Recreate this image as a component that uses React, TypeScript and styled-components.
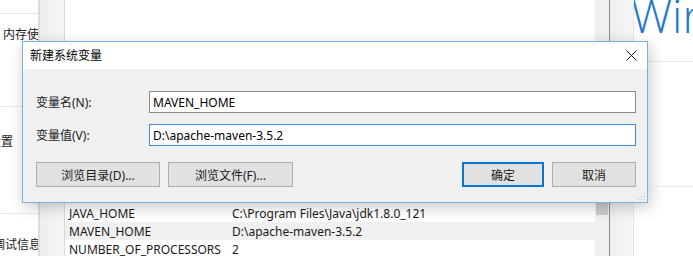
import React, { FC } from 'react';
import styled, { createGlobalStyle } from 'styled-components';

const GlobalStyle = createGlobalStyle`
    html, body {
        margin: 0;
        padding: 0;
        background: #ffffff;
    }
    body {
        font-family: "Noto Sans", "Noto Sans CJK SC", sans-serif;
        font-size: 12px;
        color: #000000;
    }
`;

const StyledDesktop = styled.div`
    position: relative;
    width: 693px;
    height: 256px;
    overflow: hidden;
    display: flex;
    background: #ffffff;
`;

/* left settings pane, clipped */
const StyledLeftPane = styled.div`
    width: 38px;
    flex: none;
    display: flex;
    flex-direction: column;
    overflow: hidden;
    background: #ffffff;
`;
const StyledLeftSection = styled.div<{ $h: number; $pt: number; $line?: boolean }>`
    height: ${p => p.$h}px;
    flex: none;
    box-sizing: border-box;
    padding-top: ${p => p.$pt}px;
    border-bottom: ${p => (p.$line ? '1px solid #e6e6e6' : 'none')};
`;
const StyledLeftText = styled.div<{ $x: number }>`
    margin-left: ${p => p.$x}px;
    line-height: 16px;
    white-space: nowrap;
    color: #1a1a1a;
`;

/* environment variables window behind the dialog */
const StyledBackWindow = styled.div`
    width: 593px;
    flex: none;
    display: flex;
    border-left: 2px solid #dcdcdc;
`;
const StyledSideStrip = styled.div<{ $w: number }>`
    width: ${p => p.$w}px;
    flex: none;
    background: linear-gradient(to right, #eeeeee, #f6f6f6);
`;
const StyledListArea = styled.div`
    flex: 1;
    display: flex;
    flex-direction: column;
    padding-top: 204px;
    background: #ffffff;
    border-left: 1px solid #d9d9d9;
`;
const StyledListRow = styled.div<{ $striped?: boolean }>`
    height: 18px;
    flex: none;
    display: flex;
    align-items: center;
    padding-left: 4px;
    background: ${p => (p.$striped ? '#f0f0f0' : '#ffffff')};
    white-space: nowrap;
    color: #1a1a1a;
`;
const StyledNameCell = styled.span`
    width: 163px;
    flex: none;
`;
const StyledScrollbar = styled.div`
    width: 14px;
    flex: none;
    display: flex;
    flex-direction: column;
    padding-top: 202px;
    background: #f0f0f0;
    border-right: 1px solid #8f8f8f;
`;
const StyledThumb = styled.div`
    height: 13px;
    margin: 0 1px;
    background: #cdcdcd;
`;

/* right settings page */
const StyledRightPane = styled.div`
    flex: 1;
    display: flex;
    flex-direction: column;
    border-left: 1px solid #e4e4e4;
    overflow: hidden;
`;
const StyledHeading = styled.div`
    height: 62px;
    flex: none;
    box-sizing: border-box;
    border-bottom: 1px solid #e8e8e8;
    overflow: hidden;
`;
const StyledHeadingText = styled.div`
    margin-top: -5px;
    font-family: "Open Sans", "Noto Sans", sans-serif;
    font-weight: 300;
    font-size: 46px;
    line-height: 40px;
    color: #2279cc;
    white-space: nowrap;
    text-indent: -3px;
`;
const StyledRightBlock = styled.div`
    height: 124px;
    flex: none;
    margin-left: 19px;
    border-bottom: 1px solid #ececec;
`;

/* the dialog window */
const StyledDialog = styled.div`
    position: absolute;
    left: 22px;
    top: 41px;
    width: 626px;
    height: 162px;
    box-sizing: border-box;
    display: flex;
    flex-direction: column;
    border: 1px solid #7fb0dd;
    background: #f0f0f0;
    box-shadow: 2px 4px 14px rgba(0, 0, 0, 0.22);
`;
const StyledTitleBar = styled.div`
    height: 27px;
    flex: none;
    display: flex;
    align-items: center;
    justify-content: space-between;
    padding: 0 10px 0 7px;
    background: #ffffff;
`;
const StyledTitle = styled.span`
    font-size: 12px;
    color: #000000;
    padding-bottom: 1px;
`;
const StyledBody = styled.div`
    flex: 1;
    display: flex;
    flex-direction: column;
    padding: 22px 11px 0 13px;
    position: relative;
`;
const StyledFieldRow = styled.div`
    display: flex;
    align-items: center;
    margin-bottom: 11px;
`;
const StyledLabel = styled.label`
    width: 113px;
    flex: none;
    color: #1a1a1a;
`;
const StyledInput = styled.div<{ $focused?: boolean }>`
    flex: 1;
    height: 22px;
    box-sizing: border-box;
    display: flex;
    align-items: center;
    padding-left: 3px;
    background: #ffffff;
    border: 1px solid ${p => (p.$focused ? '#3a8ee0' : '#8a8a8a')};
    color: #000000;
`;
const StyledButtonRow = styled.div`
    display: flex;
    justify-content: space-between;
    margin-top: 5px;
`;
const StyledButtonGroup = styled.div`
    display: flex;
    gap: 8px;
`;
const StyledButton = styled.div<{ $w: number; $default?: boolean }>`
    width: ${p => p.$w}px;
    height: 25px;
    box-sizing: border-box;
    display: flex;
    align-items: center;
    justify-content: center;
    background: #e1e1e1;
    border: 1px solid ${p => (p.$default ? '#0078d7' : '#adadad')};
    box-shadow: ${p => (p.$default ? 'inset 0 0 0 1px #0078d7' : 'none')};
    color: #1a1a1a;
`;
const StyledGrip = styled.svg`
    position: absolute;
    right: 1px;
    bottom: 1px;
`;

const CloseIcon: FC = () => (
    <svg width="11" height="11" viewBox="0 0 11 11">
        <path d="M0.5 0.5 L10.5 10.5 M10.5 0.5 L0.5 10.5" stroke="#111111" strokeWidth="1" fill="none" />
    </svg>
);

const rows = [
    { name: 'JAVA_HOME', value: 'C:\\Program Files\\Java\\jdk1.8.0_121' },
    { name: 'MAVEN_HOME', value: 'D:\\apache-maven-3.5.2' },
    { name: 'NUMBER_OF_PROCESSORS', value: '2' },
];

const App: FC = () => {
    return (
        <>
            <GlobalStyle />
            <StyledDesktop>
                <StyledLeftPane>
                    <StyledLeftSection $h={14} $pt={0} $line />
                    <StyledLeftSection $h={93} $pt={13} $line>
                        <StyledLeftText $x={3}>内存使用</StyledLeftText>
                    </StyledLeftSection>
                    <StyledLeftSection $h={107} $pt={27} $line>
                        <StyledLeftText $x={-11}>设置</StyledLeftText>
                    </StyledLeftSection>
                    <StyledLeftSection $h={42} $pt={23}>
                        <StyledLeftText $x={-7}>调试信息</StyledLeftText>
                    </StyledLeftSection>
                </StyledLeftPane>

                <StyledBackWindow>
                    <StyledSideStrip $w={24} />
                    <StyledListArea>
                        {rows.map((row, i) => (
                            <StyledListRow key={row.name} $striped={i % 2 === 1}>
                                <StyledNameCell>{row.name}</StyledNameCell>
                                <span>{row.value}</span>
                            </StyledListRow>
                        ))}
                    </StyledListArea>
                    <StyledScrollbar>
                        <StyledThumb />
                    </StyledScrollbar>
                    <StyledSideStrip $w={23} />
                </StyledBackWindow>

                <StyledRightPane>
                    <StyledHeading>
                        <StyledHeadingText>Windows</StyledHeadingText>
                    </StyledHeading>
                    <StyledRightBlock />
                </StyledRightPane>

                <StyledDialog>
                    <StyledTitleBar>
                        <StyledTitle>新建系统变量</StyledTitle>
                        <CloseIcon />
                    </StyledTitleBar>
                    <StyledBody>
                        <StyledFieldRow>
                            <StyledLabel>变量名(N):</StyledLabel>
                            <StyledInput>MAVEN_HOME</StyledInput>
                        </StyledFieldRow>
                        <StyledFieldRow>
                            <StyledLabel>变量值(V):</StyledLabel>
                            <StyledInput $focused>D:\apache-maven-3.5.2</StyledInput>
                        </StyledFieldRow>
                        <StyledButtonRow>
                            <StyledButtonGroup>
                                <StyledButton $w={124}>浏览目录(D)...</StyledButton>
                                <StyledButton $w={125}>浏览文件(F)...</StyledButton>
                            </StyledButtonGroup>
                            <StyledButtonGroup>
                                <StyledButton $w={82} $default>确定</StyledButton>
                                <StyledButton $w={84}>取消</StyledButton>
                            </StyledButtonGroup>
                        </StyledButtonRow>
                        <StyledGrip width="8" height="8" viewBox="0 0 8 8">
                            <rect x="6" y="0" width="1" height="1" fill="#b8b8b8" />
                            <rect x="3" y="3" width="1" height="1" fill="#b8b8b8" />
                            <rect x="6" y="3" width="1" height="1" fill="#b8b8b8" />
                            <rect x="0" y="6" width="1" height="1" fill="#b8b8b8" />
                            <rect x="3" y="6" width="1" height="1" fill="#b8b8b8" />
                            <rect x="6" y="6" width="1" height="1" fill="#b8b8b8" />
                        </StyledGrip>
                    </StyledBody>
                </StyledDialog>
            </StyledDesktop>
        </>
    );
};

export default App;
